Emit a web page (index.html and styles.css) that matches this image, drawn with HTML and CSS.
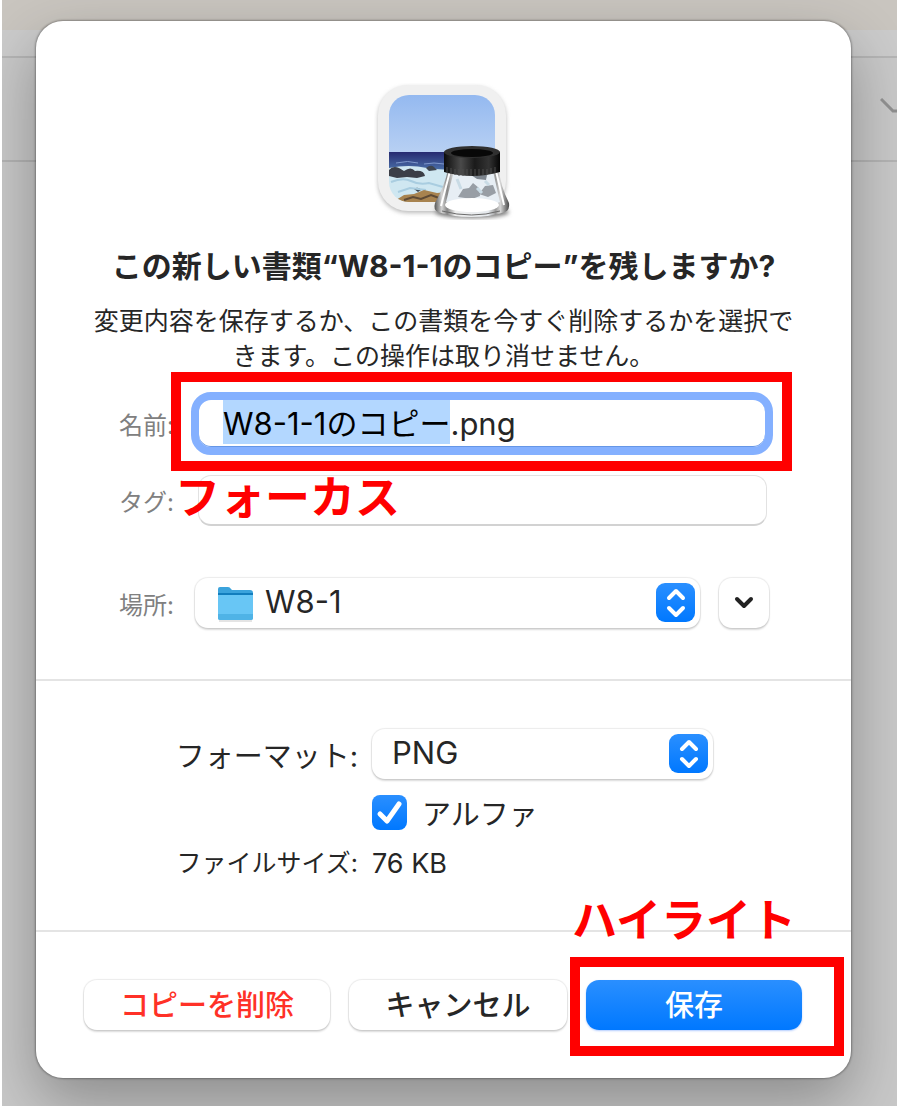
FILE: index.html
```
<!DOCTYPE html>
<html lang="ja">
<head>
	<meta charset="UTF-8">
	<meta name="viewport" content="width=device-width, initial-scale=1">
	<title>書類を保存</title>
	<link rel="stylesheet" href="styles.css">
</head>
<body>
	<div class="window">
		<svg class="window-arrow" viewBox="0 0 17 16" aria-hidden="true"><path d="M1 1l12 12h5" fill="none" stroke="#8c8c8c" stroke-width="3"/></svg>
		<form class="dialog">
			<div class="head">
				<svg class="app-icon" viewBox="0 0 140 140" aria-hidden="true">
					<defs>
						<linearGradient id="sky" x1="0" y1="0" x2="0" y2="1">
							<stop offset="0" stop-color="#94b9f0"/>
							<stop offset="1" stop-color="#b9d1f3"/>
						</linearGradient>
						<linearGradient id="sea" x1="0" y1="0" x2="0" y2="1">
							<stop offset="0" stop-color="#262a70"/>
							<stop offset="1" stop-color="#4a6fa8"/>
						</linearGradient>
						<linearGradient id="cap" x1="0" y1="0" x2="1" y2="0">
							<stop offset="0" stop-color="#0c0c0c"/>
							<stop offset=".3" stop-color="#4a4a4a"/>
							<stop offset=".55" stop-color="#1a1a1a"/>
							<stop offset=".8" stop-color="#333"/>
							<stop offset="1" stop-color="#050505"/>
						</linearGradient>
						<linearGradient id="glass" x1="0" y1="0" x2="1" y2="0">
							<stop offset="0" stop-color="#555"/>
							<stop offset=".1" stop-color="#d5d5d5"/>
							<stop offset=".17" stop-color="#858585"/>
							<stop offset=".28" stop-color="#eee"/>
							<stop offset=".72" stop-color="#e6eaee"/>
							<stop offset=".82" stop-color="#999"/>
							<stop offset=".88" stop-color="#d8d8d8"/>
							<stop offset="1" stop-color="#484848"/>
						</linearGradient>
						<clipPath id="photo"><rect x="15" y="12" width="106" height="107" rx="20"/></clipPath>
						<filter id="soft" x="-10%" y="-10%" width="120%" height="120%"><feGaussianBlur stdDeviation="2"/></filter>
					</defs>
					<rect x="4" y="4" width="128" height="126" rx="30" fill="#bbb" filter="url(#soft)"/>
					<rect x="4" y="2" width="128" height="126" rx="30" fill="#f0f0f0"/>
					<g clip-path="url(#photo)">
						<rect x="15" y="12" width="106" height="60" fill="url(#sky)"/>
						<rect x="15" y="69" width="106" height="18" fill="url(#sea)"/>
						<path d="M15 85q20-4 38 0t68-3v38H15z" fill="#cfe7f1"/>
						<path d="M22 80q12-3 22 0M50 81q10-2 20 0" stroke="#7f98cc" fill="none"/>
						<path d="M15 87q4-5 10-2l5 3q7-5 11 0 9-1 10 5l-8 2-10-1-10 1-8-2z" fill="#3b3e47"/>
						<path d="M52 85q5-4 8-1l3 3-8 1zM40 106q4-3 7 1l-3 2z" fill="#3f4650"/>
						<path d="M17 99q12-5 20-1t18 2l14 4M24 109l12-4 16 2" stroke="#a9cde0" stroke-width="2" fill="none"/>
						<path d="M22 117l8-5 10-1 10-4 13 3 9-1v12H22z" fill="#a8834f"/>
						<path d="M30 117l9-3 8 2 10-4 8 3" stroke="#5e4a35" stroke-width="2" fill="none"/>
					</g>
					<ellipse cx="98" cy="129" rx="37" ry="6" fill="#777" filter="url(#soft)"/>
					<path d="M74 86h51q1 16 10 34 1 7-4 9-14 5-34 5t-33-5q-5-2-3-9 10-18 13-34z" fill="url(#glass)"/>
					<path d="M80 88h39l7 31q-12 6-27 6t-27-6z" fill="#e7eef4"/>
					<path d="M84 114l5-8 6-1 4-5 6 5 1 8-8 3zM105 111l6-8 8-1 3 8-8 4z" fill="#989ea5"/>
					<path d="M97 92l8-3 8 3-1 5-9-1z" fill="#7d858e"/>
					<path d="M83 96l4 10M103 105l5 5M111 98l4 4" stroke="#c9dbe5" stroke-width="3"/>
					<ellipse cx="98" cy="122" rx="27" ry="7" fill="#fff"/>
					<path d="M68 128q30 8 58 0" stroke="#6b6b6b" stroke-width="1" fill="none"/>
					<path d="M76 88l-9 35M122 88l8 34" stroke="#fff" stroke-width="2"/>
					<path d="M70 69q28-10 56 0v20q-28 8-56 0z" fill="url(#cap)"/>
					<ellipse cx="98" cy="69" rx="28" ry="6" fill="#303030"/>
					<ellipse cx="98" cy="70" rx="21" ry="4" fill="#080808"/>
					<path d="M73 84v6m4-5v6m4-5v6m4-6v7m4-7v7m4-7v7m4-7v7m4-7v7m4-7v7m4-7v6m4-6v6m4-7v6m4-7v6" stroke="#4d4d4d"/>
				</svg>
				<h1>この新しい書類“W8-1-1のコピー”を残しますか?</h1>
				<p>変更内容を保存するか、この書類を今すぐ削除するかを選択で<br>きます。この操作は取り消せません。</p>
			</div>
			<div class="place">
				<div class="row row-name">
					<label for="name">名前:</label>
					<div class="field marked">
						<input class="name" id="name" type="text" value="W8-1-1のコピー.png" spellcheck="false" autocomplete="off">
						<span class="frame frame-name"></span>
					</div>
				</div>
				<div class="row row-tag">
					<label for="tag">タグ:</label>
					<div class="field marked">
						<input class="tag" id="tag" type="text">
						<span class="note note-focus">フォーカス</span>
					</div>
				</div>
				<div class="row">
					<label for="folder">場所:</label>
					<div class="field folder-field">
						<div class="select">
							<svg class="folder-icon" viewBox="0 0 38 36" aria-hidden="true">
								<path d="M2 2q0-2 2-2h8q2 0 3 2l1 1h18q3 0 3 3v26H2z" fill="#3ba3dc"/>
								<path d="M2 6h35v4H2z" fill="#127dbd"/>
								<path d="M2 8h35v23q0 2-2 2H4q-2 0-2-2z" fill="#68c6f5"/>
								<path d="M2 27h35v4q0 2-2 2H4q-2 0-2-2z" fill="#4fb3e6"/>
								<path d="M3 34h33" stroke="#c9c9c9"/>
							</svg>
							<select class="has-icon" id="folder"><option>W8-1</option></select>
							<svg class="stepper" viewBox="0 0 39 39" aria-hidden="true"><use href="#updown"/></svg>
						</div>
						<button class="btn more" type="button" aria-label="展開">
							<svg viewBox="0 0 20 14" aria-hidden="true"><path d="M3 3l7 7 7-7" fill="none" stroke="#222" stroke-width="4" stroke-linecap="round" stroke-linejoin="round"/></svg>
						</button>
					</div>
				</div>
			</div>
			<div class="format">
				<label for="format">フォーマット:</label>
				<div class="select">
					<select id="format"><option>PNG</option></select>
					<svg class="stepper" viewBox="0 0 39 39" aria-hidden="true">
						<defs>
							<linearGradient id="blue" x1="0" y1="0" x2="0" y2="1">
								<stop offset="0" stop-color="#2a8fff"/>
								<stop offset="1" stop-color="#0078ff"/>
							</linearGradient>
						</defs>
						<g id="updown">
							<rect width="39" height="39" rx="9" fill="url(#blue)"/>
							<path d="M13 15l7-7 7 7M13 25l7 7 7-7" fill="none" stroke="#fff" stroke-width="4" stroke-linecap="round" stroke-linejoin="round"/>
						</g>
					</svg>
				</div>
				<div class="alpha">
					<input id="alpha" type="checkbox" checked>
					<label for="alpha">アルファ</label>
				</div>
				<span class="size-label">ファイルサイズ:</span>
				<span class="size">76 KB</span>
			</div>
			<div class="actions">
				<button class="btn delete" type="button">コピーを削除</button>
				<button class="btn" type="button">キャンセル</button>
				<div class="marked">
					<button class="btn save" type="submit">保存</button>
					<span class="frame frame-save"></span>
					<span class="note note-save">ハイライト</span>
				</div>
			</div>
		</form>
	</div>
	<script>
	window.onload=function(){
		var name = document.getElementById('name');
		name.focus();
		// 拡張子以外を選択
		name.setSelectionRange(0, name.value.lastIndexOf('.'));
	}
	</script>
</body>
</html>
```
FILE: styles.css
```
*{margin: 0;padding: 0;box-sizing: border-box;}
body{
	background: #fff;
	color: #262626;
	font-family: Inter, "Noto Sans CJK JP", sans-serif;
	font-size: 29px;
}
input, select, button{
	font: inherit;
	color: inherit;
	outline: none;
}
.window{
	position: relative;
	min-height: 100vh;
	margin: 0 3px 0 2px;
	padding: 21px 46px 28px 34px;
	overflow: hidden;
	background: linear-gradient(#c9c5bf 30px, #cbcbcb 30px, #cbcbcb 56px, #b5b5b5 56px, #b5b5b5 58px, #c8c8c8 58px, #c8c8c8 160px, #b3b3b3 160px, #b3b3b3 162px, #c8c8c8 162px);
}
.window-arrow{
	position: absolute;
	top: 98px;
	right: 0;
	width: 17px;
}
.dialog{
	border-radius: 27px;
	background: #fff;
	box-shadow: 0 0 2px 1px rgba(0,0,0,.3), 0 24px 60px rgba(0,0,0,.3);
}
.head{
	padding: 62px 48px 18px;
	text-align: center;
}
.app-icon{
	display: block;
	width: 140px;
	margin: 0 auto 25px;
}
h1{
	font-size: 30px;
	line-height: 36px;
	margin-bottom: 20px;
	white-space: nowrap;
}
.head p{
	font-size: 25px;
	line-height: 35px;
	white-space: nowrap;
}

.place{
	padding: 0 82px 51px 83px;
	border-bottom: 2px solid #e4e4e4;
}
.row{
	display: flex;
	align-items: center;
	gap: 20px;
}
.row label{
	width: 56px;
	color: #808080;
	font-size: 24px;
	white-space: nowrap;
}
.field{
	flex: 1;
}
.row-name{margin-bottom: 20px;}
.row-tag{margin-bottom: 52px;}
.name{
	display: block;
	width: calc(100% + 8px);
	height: 63px;
	margin: 0 -4px;
	padding: 0 24px 4px;
	border: 8px solid #84b0ff;
	border-radius: 20px;
	background: #fff;
	box-shadow: inset 0 -1px #6596e6;
	font-size: 31px;
	line-height: 40px;
}
.name::selection{
	background: #b3d7ff;
	color: #000;
}
.tag{
	display: block;
	width: calc(100% - 5px);
	height: 51px;
	margin-left: 3px;
	padding: 0 16px;
	border: 1px solid #e2e2e2;
	border-bottom: 2px solid #d2d2d2;
	border-radius: 13px;
	background: #fff;
}
.folder-field{
	display: flex;
	gap: 19px;
}
.select{
	position: relative;
	flex: 1;
}
.select select{
	display: block;
	width: 100%;
	height: 50px;
	padding: 0 60px 4px 20px;
	border: none;
	border-radius: 13px;
	background: #fff;
	box-shadow: 0 0 1px 1px rgba(0,0,0,.08), 0 2px 2px rgba(0,0,0,.14);
	font-size: 31px;
	appearance: none;
}
.select .has-icon{padding-left: 70px;}
.stepper{
	position: absolute;
	top: 5px;
	right: 5px;
	width: 39px;
	height: 39px;
	pointer-events: none;
}
.folder-icon{
	position: absolute;
	top: 9px;
	left: 21px;
	width: 38px;
	pointer-events: none;
}

.format{
	display: grid;
	grid-template-columns: 322px 1fr;
	column-gap: 14px;
	align-items: center;
	padding: 48px 138px 48px 0;
	border-bottom: 2px solid #e4e4e4;
}
.format > label, .size-label{
	text-align: right;
}
.alpha{
	grid-column: 2;
	display: flex;
	align-items: center;
	gap: 15px;
	height: 34px;
	margin: 16px 0;
}
.alpha input{
	width: 35px;
	height: 35px;
	border-radius: 8px;
	background: url("data:image/svg+xml,%3Csvg xmlns='http://www.w3.org/2000/svg' viewBox='0 0 35 35'%3E%3Cpath d='M8 19l7 7L27 9' fill='none' stroke='%23fff' stroke-width='5' stroke-linecap='round' stroke-linejoin='round'/%3E%3C/svg%3E"), linear-gradient(#2a8fff, #0078ff);
	appearance: none;
}
.size-label, .size{
	font-size: 25px;
	line-height: 37px;
}
.size{font-size: 27px;}

.actions{
	display: grid;
	grid-template-columns: 246fr 218fr 216fr;
	gap: 19px;
	padding: 48px 49px 48px 48px;
}
.btn{
	width: 100%;
	height: 50px;
	padding-bottom: 4px;
	border: none;
	border-radius: 13px;
	background: #fff;
	box-shadow: 0 0 1px 1px rgba(0,0,0,.08), 0 2px 2px rgba(0,0,0,.14);
	font-weight: 500;
	white-space: nowrap;
}
.more{
	width: 50px;
	padding-bottom: 0;
}
.more svg{
	display: block;
	width: 20px;
	margin: 0 auto;
}
.delete{color: #ff3127;}
.save{
	background: linear-gradient(#2a8fff, #0078ff);
	box-shadow: 0 1px 2px rgba(0,90,255,.3);
	color: #fff;
}

/* 赤い枠と注釈 */
.marked{position: relative;}
.frame{
	position: absolute;
	border: 10px solid #f00;
	pointer-events: none;
}
.frame-name{
	top: -20px;
	right: -23px;
	bottom: -16px;
	left: -24px;
}
.frame-save{
	top: -23px;
	right: -42px;
	bottom: -26px;
	left: -16px;
}
.note{
	position: absolute;
	color: #f00;
	font-size: 45px;
	font-weight: bold;
	line-height: 50px;
	white-space: nowrap;
	pointer-events: none;
}
.note-focus{
	top: -2px;
	left: -20px;
}
.note-save{
	top: -84px;
	left: -14px;
}
```
